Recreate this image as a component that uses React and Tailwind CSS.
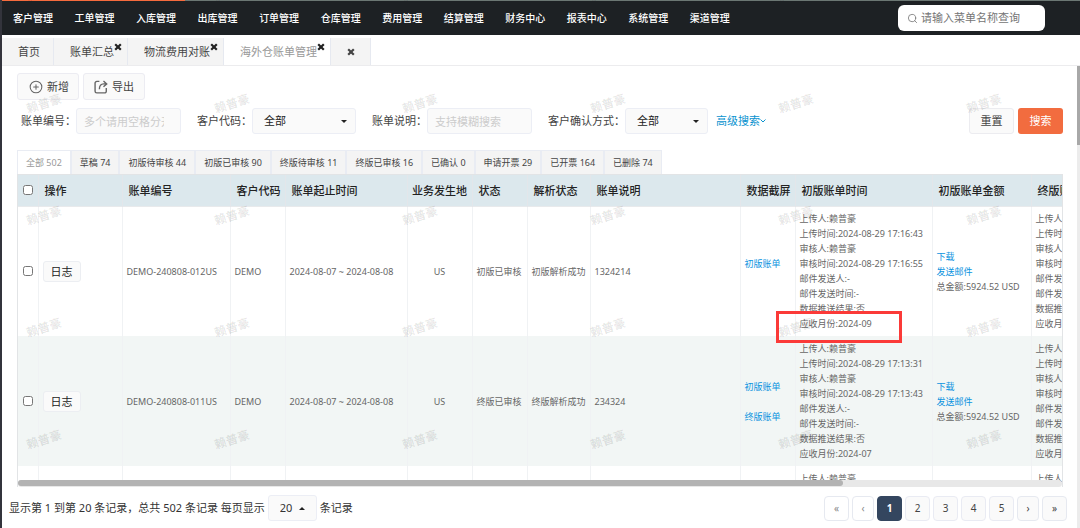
import React, { useState } from 'react';
import { Search, CirclePlus } from 'lucide-react';

const MENUS = ['客户管理', '工单管理', '入库管理', '出库管理', '订单管理', '仓库管理', '费用管理', '结算管理', '财务中心', '报表中心', '系统管理', '渠道管理'];

const STATUS_TABS = [
  ['全部', 502], ['草稿', 74], ['初版待审核', 44], ['初版已审核', 90], ['终版待审核', 11],
  ['终版已审核', 16], ['已确认', 0], ['申请开票', 29], ['已开票', 164], ['已删除', 74],
];

const COLUMNS = [
  { title: '操作', width: 84 },
  { title: '账单编号', width: 108 },
  { title: '客户代码', width: 55 },
  { title: '账单起止时间', width: 122 },
  { title: '业务发生地', width: 65, center: true },
  { title: '状态', width: 55 },
  { title: '解析状态', width: 63 },
  { title: '账单说明', width: 150 },
  { title: '数据截屏', width: 55 },
  { title: '初版账单时间', width: 137 },
  { title: '初版账单金额', width: 99 },
  { title: '终版账单时间', width: 137 },
  { title: '终版账单金额', width: 99 },
];

const ROWS = [
  { no: 'DEMO-240808-012US', status: '初版已审核', parse: '初版解析成功', remark: '1324214', shots: ['初版账单'], upload: '17:16:43', audit: '17:16:55', month: '2024-09', marked: true },
  { no: 'DEMO-240808-011US', status: '终版已审核', parse: '终版解析成功', remark: '234324', shots: ['初版账单', '终版账单'], upload: '17:13:31', audit: '17:13:43', month: '2024-07' },
  { no: 'DEMO-240808-010US', status: '终版已审核', parse: '终版解析成功', remark: '234324', shots: ['初版账单', '终版账单'], upload: '17:10:12', audit: '17:10:25', month: '2024-07' },
];

function Cross({ className }) {
  return (
    <svg viewBox="0 0 8 8" className={className} aria-hidden="true">
      <path d="M1.2 1.2 L6.8 6.8 M6.8 1.2 L1.2 6.8" stroke="currentColor" strokeWidth="2.2" />
    </svg>
  );
}

function PageTab({ title, active, closable }) {
  return (
    <div className={`relative flex items-center border-r border-[#e6e9f0] pl-4 pr-[13px] ${active ? 'bg-white text-[#999]' : 'bg-[#f4f4f4] text-[#444]'}`}>
      <a href="#tab">{title}</a>
      {closable && (
        <button type="button" aria-label="关闭" className="absolute right-[5px] top-[5px] text-[#222]">
          <Cross className="size-2" />
        </button>
      )}
    </div>
  );
}

function SelectBox({ id, className }) {
  return (
    <div className={`relative ${className}`}>
      <select id={id} className="h-[26px] w-full appearance-none rounded-[3px] border border-[#eceef5] bg-[#fafafa] pl-[11px] text-[#222]">
        <option>全部</option>
      </select>
      <svg viewBox="0 0 6 3" className="pointer-events-none absolute right-[9px] top-[12px] h-[3px] w-[6px]" aria-hidden="true">
        <path d="M0 0H6L3 3Z" fill="#222" />
      </svg>
    </div>
  );
}

function TimeInfo({ row, marked }) {
  return (
    <>
      <p>上传人:赖普豪</p>
      <p>上传时间:2024-08-29 {row.upload}</p>
      <p>审核人:赖普豪</p>
      <p>审核时间:2024-08-29 {row.audit}</p>
      <p>邮件发送人:-</p>
      <p>邮件发送时间:-</p>
      <p>数据推送结果:否</p>
      <p className="relative">
        应收月份:{row.month}
        {marked && <span className="absolute -left-6 -top-[5px] h-8 w-[126px] border-[3px] border-[#fb3a38]" />}
      </p>
    </>
  );
}

function Amount() {
  return (
    <>
      <a href="#download" className="block text-[#0a93e0]">下载</a>
      <a href="#mail" className="block text-[#0a93e0]">发送邮件</a>
      <p>总金额:5924.52 USD</p>
    </>
  );
}

function BillTable() {
  const cell = 'border-r border-[#f0f2f4] pl-1';
  return (
    <table className="w-[1249px] table-fixed border-collapse text-left text-[9px] leading-[15px] text-[#666]">
      <colgroup>
        <col style={{ width: 20 }} />
        {COLUMNS.map((c) => <col key={c.title} style={{ width: c.width }} />)}
      </colgroup>
      <thead>
        <tr className="h-[31px] border-b border-[#e8eaec] bg-[#dce8ed] text-[11px] text-[#222]">
          <th className="border-r border-[#e3e6ea] pl-[5px]">
            <input type="checkbox" aria-label="全选" className="block size-[10px]" />
          </th>
          {COLUMNS.map((c) => (
            <th key={c.title} className={`whitespace-nowrap border-r border-[#e3e6ea] font-medium ${c.center ? 'text-center' : 'pl-[6px]'}`}>{c.title}</th>
          ))}
        </tr>
      </thead>
      <tbody>
        {ROWS.map((row) => (
          <tr key={row.no} className="h-[130px] whitespace-nowrap even:bg-[#f2f6f5]">
            <td className="border-r border-[#f0f2f4] pl-[5px]">
              <input type="checkbox" aria-label={row.no} className="block size-[10px]" />
            </td>
            <td className={cell}>
              <button type="button" className="h-[21px] rounded-[3px] border border-[#eceef2] bg-[#fafafa] px-[7px] text-[11px] text-[#222]">日志</button>
            </td>
            <td className={cell}>{row.no}</td>
            <td className={cell}>DEMO</td>
            <td className={cell}>2024-08-07 ~ 2024-08-08</td>
            <td className="border-r border-[#f0f2f4] text-center">US</td>
            <td className={cell}>{row.status}</td>
            <td className={cell}>{row.parse}</td>
            <td className={cell}>{row.remark}</td>
            <td className={cell}>
              <div className="flex min-h-[30px] flex-col gap-[15px]">
                {row.shots.map((s) => <a key={s} href="#shot" className="text-[#0a93e0]">{s}</a>)}
              </div>
            </td>
            <td className={cell}><TimeInfo row={row} marked={row.marked} /></td>
            <td className={cell}><Amount /></td>
            <td className={cell}><TimeInfo row={row} /></td>
            <td className={cell}><Amount /></td>
          </tr>
        ))}
      </tbody>
    </table>
  );
}

function Pagination() {
  const [page, setPage] = useState(1);
  const base = 'h-[25px] rounded-[4px] border border-[#e6e9f0]';
  return (
    <nav className="flex gap-[3px] text-[10px] text-[#444]" aria-label="分页">
      <button type="button" className={`${base} w-[25px] bg-white text-[#888]`}>«</button>
      <button type="button" className={`${base} w-[22px] bg-white text-[#888]`}>‹</button>
      {[1, 2, 3, 4, 5].map((n) => (
        <button
          key={n}
          type="button"
          onClick={() => setPage(n)}
          className={`h-[25px] w-[25px] rounded-[4px] border ${n === page ? 'border-[#34465f] bg-[#34465f] font-bold text-white' : 'border-[#e9ebf3] bg-[#fafafa]'}`}
        >
          {n}
        </button>
      ))}
      <button type="button" className={`${base} w-[22px] bg-[#fafafa]`}>›</button>
      <button type="button" className={`${base} w-[25px] bg-[#fafafa]`}>»</button>
    </nav>
  );
}

// Tiled user name laid over the whole page
function Watermark() {
  return (
    <div className="pointer-events-none absolute inset-0 overflow-hidden" aria-hidden="true">
      <div className="-mr-[188px] -mt-16 grid auto-rows-[112px] grid-cols-[repeat(auto-fill,188px)] items-center">
        {Array.from({ length: 30 }, (_, i) => (
          <span key={i} className="ml-6 w-9 -rotate-[18deg] whitespace-nowrap text-[12px] font-bold text-black/10">赖普豪</span>
        ))}
      </div>
    </div>
  );
}

export default function App() {
  return (
    <div className="relative flex h-screen flex-col overflow-hidden border-l-2 border-[#33343c] bg-white font-['Noto_Sans','Noto_Sans_CJK_SC',sans-serif] text-[11px] leading-4 text-[#444]">
      <div className="h-px shrink-0 bg-[#6b7773]">
        <div className="h-full w-[17%] bg-[#f56b3d]" />
      </div>
      <header className="flex h-[34px] shrink-0 items-center justify-between bg-[#1d2124] pl-[11px] pr-[35px]">
        <nav className="flex w-[717px] justify-between text-[10px] font-medium text-white">
          {MENUS.map((m) => <a key={m} href="#menu">{m}</a>)}
        </nav>
        <label className="flex h-[26px] w-[147px] items-center gap-[3px] rounded-md bg-white pl-[9px]">
          <Search className="size-[11px] shrink-0 text-[#777]" strokeWidth={1.8} />
          <input type="text" aria-label="菜单搜索" placeholder="请输入菜单名称查询" className="w-full outline-none placeholder:text-[#757575]" />
        </label>
      </header>

      <div className="mt-[3px] flex h-7 shrink-0 border-b border-[#ececee]">
        <PageTab title="首页" />
        <PageTab title="账单汇总" closable />
        <PageTab title="物流费用对账" closable />
        <PageTab title="海外仓账单管理" closable active />
        <button type="button" aria-label="关闭全部" className="flex w-10 items-center justify-center border-r border-[#e6e9f0] bg-[#f4f4f4] text-[#444]">
          <Cross className="size-2" />
        </button>
      </div>

      <main className="relative flex min-h-0 flex-1 flex-col pb-[7px] pt-[7px]">
        <div className="flex gap-1 pl-[15px]">
          <button type="button" className="flex h-[27px] items-center gap-1 rounded-[3px] border border-[#ececf2] bg-[#fafafa] pl-[11px] pr-[9px]">
            <CirclePlus className="size-[14px] text-[#666]" strokeWidth={1.8} />新增
          </button>
          <button type="button" className="flex h-[27px] items-center gap-1 rounded-[3px] border border-[#ececf2] bg-[#fafafa] px-[10px]">
            <svg viewBox="0 0 13 13" className="size-[14px]" fill="none" stroke="#666" strokeWidth="1.3" aria-hidden="true">
              <path d="M5 1.300H2.600A1.600 1.600 0 0 0 1 2.900v7.500A1.600 1.600 0 0 0 2.600 12h7.200a1.600 1.600 0 0 0 1.600-1.600V7.500" />
              <path d="M8.800 1l3 2.600-3 2.600M11.500 3.600H9C6.500 3.600 5 5.500 5 8.500" />
            </svg>
            导出
          </button>
        </div>

        <form className="mt-2 flex items-center pl-[19px] pr-[17px]" onSubmit={(e) => e.preventDefault()}>
          <label htmlFor="bill-no">账单编号：</label>
          <input id="bill-no" type="text" placeholder="多个请用空格分开" className="mr-4 h-[26px] w-[105px] rounded-[3px] border border-[#eceef5] bg-[#fafafa] pl-[7px] pr-4 placeholder:text-[#ccc]" />
          <label htmlFor="customer">客户代码：</label>
          <SelectBox id="customer" className="mr-4 w-[104px]" />
          <label htmlFor="remark">账单说明：</label>
          <input id="remark" type="text" placeholder="支持模糊搜索" className="mr-4 h-[26px] w-[105px] rounded-[3px] border border-[#eceef5] bg-[#fafafa] pl-[7px] pr-4 placeholder:text-[#ccc]" />
          <label htmlFor="confirm">客户确认方式：</label>
          <SelectBox id="confirm" className="mr-2 w-[83px]" />
          <a href="#advanced" className="flex items-center text-[#0a93cf]">
            高级搜索
            <svg viewBox="0 0 6 4" className="h-1 w-[6px]" fill="none" stroke="currentColor" aria-hidden="true">
              <path d="M.5 .5L3 3L5.500 .5" />
            </svg>
          </a>
          <button type="reset" className="ml-auto h-[26px] w-[45px] rounded-[3px] border border-[#ececf0] bg-[#fafafa]">重置</button>
          <button type="submit" className="ml-1 h-[26px] w-[45px] rounded-[3px] bg-[#f26c3f] text-white">搜索</button>
        </form>

        <div className="mt-4 flex pl-[15px] text-[9px]">
          {STATUS_TABS.map(([name, count], i) => (
            <button key={name} type="button" className={`h-6 border-x border-t border-[#e9ecf3] px-2 ${i === 0 ? 'bg-white text-[#999]' : 'bg-[#f4f4f4]'}`}>
              {name} {count}
            </button>
          ))}
        </div>

        <div className="relative ml-[15px] mr-[17px] min-h-0 flex-1 overflow-hidden border-x border-t border-[#e2e4e6]">
          <BillTable />
          <div className="absolute inset-x-0 bottom-0 h-[7px] rounded bg-[#e8e8e8]">
            <div className="h-[6px] w-[79%] rounded bg-[#b3b3b3]" />
          </div>
        </div>

        <footer className="mt-2 flex items-center justify-between pl-[7px] pr-[13px]">
          <div className="flex items-center gap-[3px] text-[#333]">
            <span>显示第 1 到第 20 条记录，总共 502 条记录 每页显示</span>
            <div className="relative">
              <select aria-label="每页条数" className="h-[26px] w-[49px] appearance-none rounded-[3px] border border-[#eceef5] bg-[#fafafa] pl-[11px]">
                <option>20</option>
              </select>
              <svg viewBox="0 0 6 3" className="pointer-events-none absolute right-3 top-[12px] h-[3px] w-[6px]" aria-hidden="true">
                <path d="M0 3H6L3 0Z" fill="#222" />
              </svg>
            </div>
            <span>条记录</span>
          </div>
          <Pagination />
        </footer>

        <div className="absolute inset-y-0 right-0 w-[3px] bg-[#ececec]">
          <div className="h-[17%] bg-[#a8a8a8]" />
        </div>
      </main>
      <Watermark />
    </div>
  );
}
